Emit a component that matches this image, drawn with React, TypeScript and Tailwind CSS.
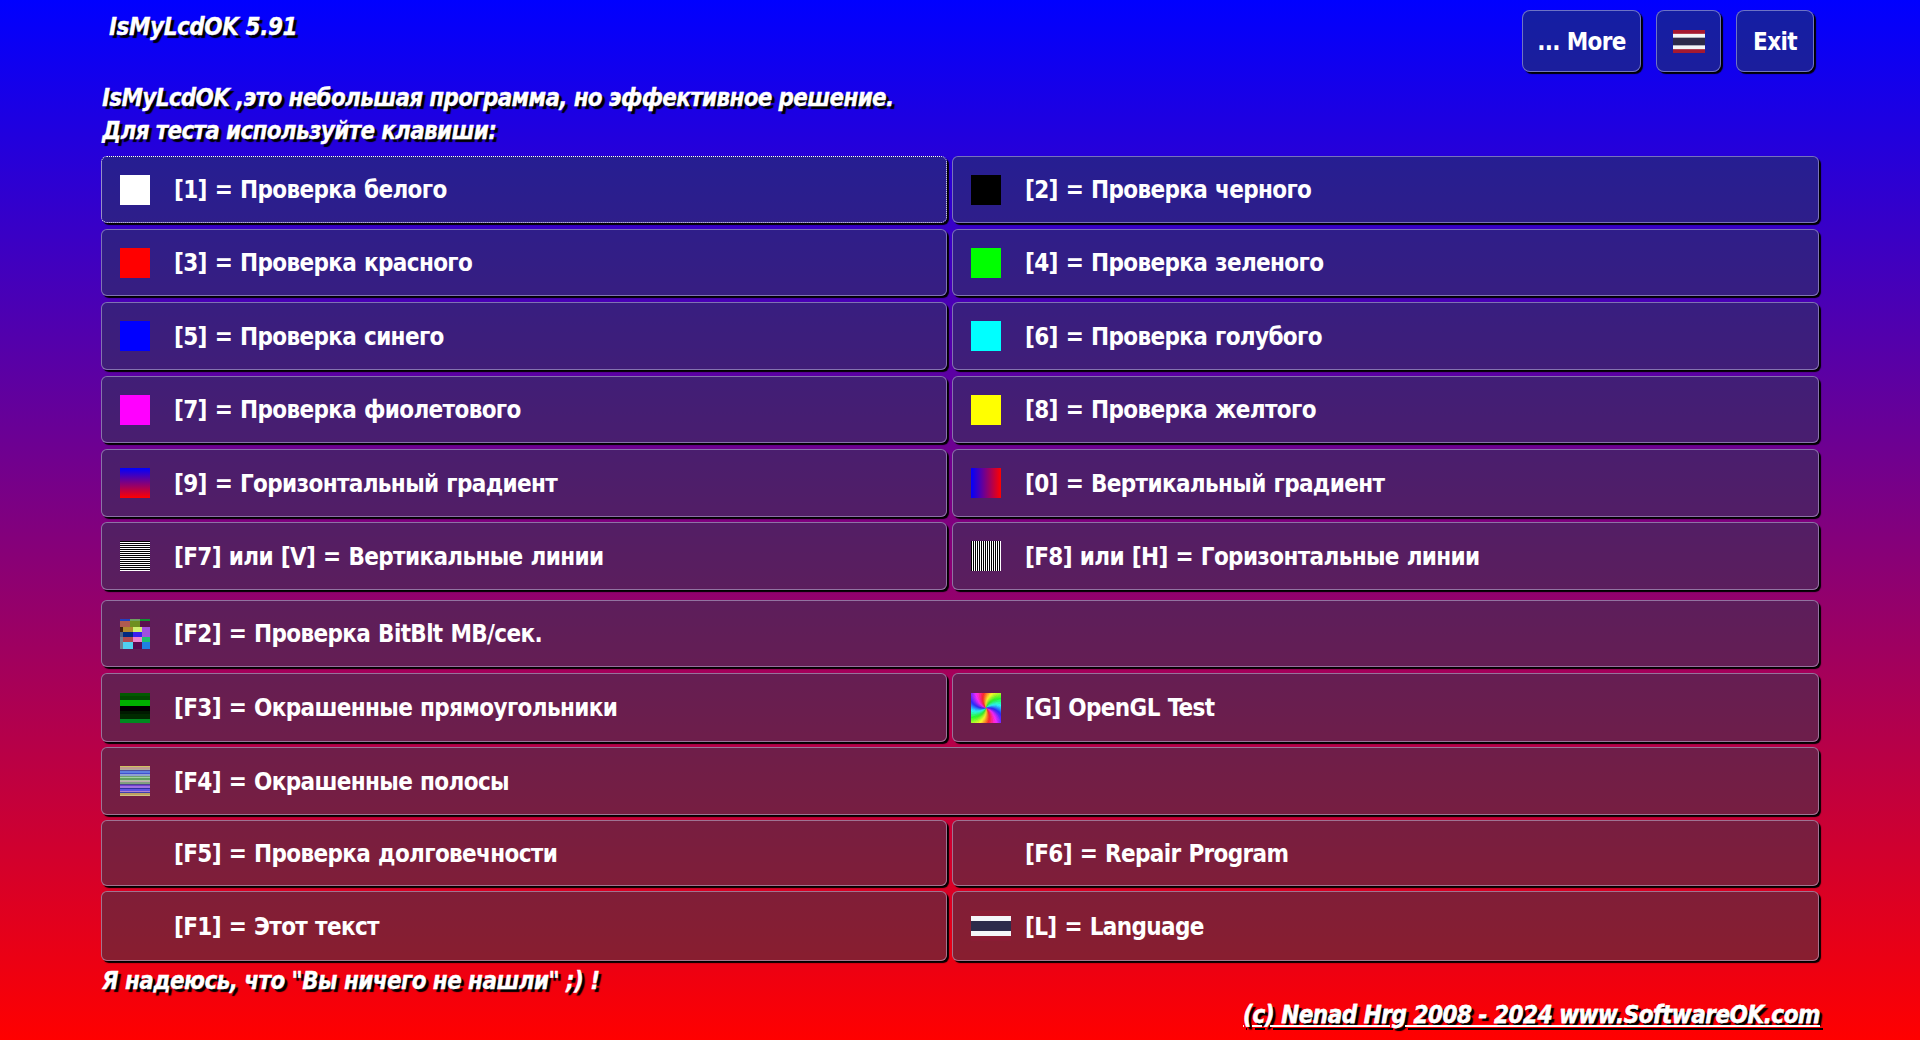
import React from 'react';

const FONT = "font-['DejaVu_Sans','Noto_Sans',sans-serif] [font-stretch:condensed]";
const HEADING = 'font-bold text-white italic [-webkit-text-stroke:0.3px_white] [text-shadow:3px_3px_1px_#000]';

const Flag = ({ className, red = '#a51931' }: { className: string; red?: string }) => (
  <svg className={className} viewBox="0 0 40 30" preserveAspectRatio="none">
    <rect width="40" height="30" fill={red} />
    <rect y="5" width="40" height="20" fill="#f4f5f8" />
    <rect y="10" width="40" height="10" fill="#2d2a4a" />
  </svg>
);

const Swatch = ({ className }: { className: string }) => <div className={`h-[30px] w-[30px] ${className}`} />;

const HLines = () => (
  <svg className="h-[30px] w-[30px]" viewBox="0 0 30 30">
    <rect width="30" height="30" fill="#fff" />
    {Array.from({ length: 15 }, (_, i) => (
      <rect key={i} y={i * 2} width="30" height="1" fill="#000" />
    ))}
  </svg>
);

const VLines = () => (
  <svg className="h-[30px] w-[30px]" viewBox="0 0 30 30">
    <rect width="30" height="30" fill="#fff" />
    {Array.from({ length: 15 }, (_, i) => (
      <rect key={i} x={i * 2} width="1" height="30" fill="#000" />
    ))}
  </svg>
);

// x, y, w, h, colour
const mosaic: [number, number, number, number, string][] = [
  [0, 0, 10, 2, '#2040c0'],
  [10, 0, 10, 2, '#70a060'],
  [20, 0, 10, 2, '#109030'],
  [0, 2, 10, 6, '#b05a50'],
  [10, 2, 10, 6, '#6f8f20'],
  [20, 2, 10, 6, '#5a1050'],
  [0, 8, 3, 5, '#402010'],
  [3, 8, 10, 5, '#b08a30'],
  [13, 8, 9, 5, '#d0f070'],
  [22, 8, 8, 10, '#a050e0'],
  [0, 13, 3, 5, '#506080'],
  [3, 13, 10, 5, '#002a80'],
  [13, 13, 9, 5, '#3a20f0'],
  [0, 18, 3, 12, '#708090'],
  [3, 18, 10, 5, '#b04a50'],
  [13, 18, 9, 5, '#f080d0'],
  [22, 18, 8, 5, '#20c070'],
  [3, 23, 10, 7, '#50d0f0'],
  [13, 23, 9, 7, '#5a0a50'],
  [22, 23, 8, 7, '#2080e0'],
];

const Mosaic = () => (
  <svg className="h-[30px] w-[30px]" viewBox="0 0 30 30" shapeRendering="crispEdges">
    {mosaic.map(([x, y, w, h, c]) => (
      <rect key={`${x}-${y}`} x={x} y={y} width={w} height={h} fill={c} />
    ))}
  </svg>
);

const greenBands: [number, number, string][] = [
  [0, 3, '#005a00'],
  [3, 4, '#004a00'],
  [7, 6, '#00b000'],
  [13, 5, '#000000'],
  [18, 3, '#001a00'],
  [21, 5, '#002a00'],
  [26, 4, '#008a20'],
];

const GreenBars = () => (
  <svg className="h-[30px] w-[30px]" viewBox="0 0 30 30" shapeRendering="crispEdges">
    {greenBands.map(([y, h, c]) => (
      <rect key={y} y={y} width="30" height={h} fill={c} />
    ))}
  </svg>
);

const stripeColors = [
  '#d0c060', '#c09a90', '#b0a8a0', '#5050a0', '#6080e0', '#4050d0', '#90a0d0', '#70a070', '#a0d0a0', '#60a060',
  '#b0c0a0', '#c0a8b0', '#80a080', '#504090', '#7040d0', '#a070e0', '#3030a0', '#6050e0', '#b080d0', '#4040b0',
  '#c0a060', '#d0c080',
];

const Stripes = () => (
  <svg className="h-[30px] w-[30px]" viewBox="0 0 30 30" preserveAspectRatio="none" shapeRendering="crispEdges">
    {stripeColors.map((c, i) => (
      <rect key={i} y={(i * 30) / 22} width="30" height={30 / 22 + 0.5} fill={c} />
    ))}
  </svg>
);

// pinwheel: thin wedges bent around the centre, hue runs round twice
const swirlArm = (a: number) => {
  const out: string[] = [];
  for (let r = 0; r <= 24; r += 2) {
    const t = ((a + r * 2) * Math.PI) / 180;
    out.push(`${(15 + r * Math.cos(t)).toFixed(2)} ${(15 + r * Math.sin(t)).toFixed(2)}`);
  }
  return out;
};

const swirlPath = (deg: number) => `M${[...swirlArm(deg), ...swirlArm(deg + 5).reverse()].join('L')}Z`;

const Swirl = () => (
  <svg className="h-[30px] w-[30px]" viewBox="0 0 30 30">
    {Array.from({ length: 120 }, (_, i) => (
      <path key={i} d={swirlPath(i * 3)} fill={`hsl(${(i * 6 + 260) % 360} 100% 58%)`} />
    ))}
  </svg>
);

type BtnProps = {
  icon?: React.ReactNode;
  label: string;
  focused?: boolean;
  className?: string;
};

const KeyButton = ({ icon, label, focused, className = '' }: BtnProps) => (
  <button
    className={`flex h-full items-center rounded-[6px] bg-[#263c4b]/50 pl-[18px] text-[24px] font-bold tracking-[-0.65px] text-white shadow-[2px_2px_1px_#000] [word-spacing:1px] ${
      focused ? 'border border-dotted border-white' : 'border border-[#c8c8e6]/50'
    } ${className}`}
  >
    <span className="flex h-[30px] w-[54px] shrink-0 items-center">{icon}</span>
    <span className="pt-[1px] whitespace-nowrap">{label}</span>
  </button>
);

const TopButton = ({ className, children }: { className: string; children: React.ReactNode }) => (
  <button
    className={`flex h-[62px] items-center justify-center rounded-[8px] border border-[#c8c8e6]/50 bg-[#263c4b]/50 pt-[1px] text-[24px] font-bold tracking-[-0.65px] text-white shadow-[2px_2px_1px_#000] ${className}`}
  >
    {children}
  </button>
);

const ROW = 'grid grid-cols-[846px_867px] gap-x-[5px]';

export default function App() {
  return (
    <div className={`flex h-[1040px] w-[1920px] flex-col overflow-hidden bg-[linear-gradient(to_bottom,#0000ff,#ff0000)] pl-[101px] ${FONT}`}>
      {/* Title and top buttons */}
      <div className="flex h-[82px] items-start pt-[10px] pr-[106px]">
        <div className={`ml-[8px] text-[24px] leading-[34px] tracking-[-0.45px] ${HEADING}`}>IsMyLcdOK 5.91</div>
        <div className="ml-auto flex gap-[15px]">
          <TopButton className="w-[119px]">... More</TopButton>
          <TopButton className="w-[65px]">
            <Flag className="h-[23px] w-[32px]" />
          </TopButton>
          <TopButton className="w-[78px]">Exit</TopButton>
        </div>
      </div>

      <div className={`ml-[1px] h-[74px] text-[24px] leading-[33px] tracking-[-0.7px] ${HEADING}`}>
        <div>IsMyLcdOK ,это небольшая программа, но эффективное решение.</div>
        <div>Для теста используйте клавиши:</div>
      </div>

      {/* Test buttons */}
      <div className={`${ROW} h-[67px]`}>
        <KeyButton focused icon={<Swatch className="bg-white" />} label="[1] = Проверка белого" />
        <KeyButton icon={<Swatch className="bg-black" />} label="[2] = Проверка черного" />
      </div>
      <div className={`${ROW} mt-[6px] h-[67px]`}>
        <KeyButton icon={<Swatch className="bg-[#ff0000]" />} label="[3] = Проверка красного" />
        <KeyButton icon={<Swatch className="bg-[#00ff00]" />} label="[4] = Проверка зеленого" />
      </div>
      <div className={`${ROW} mt-[6px] h-[68px]`}>
        <KeyButton icon={<Swatch className="bg-[#0000ff]" />} label="[5] = Проверка синего" />
        <KeyButton icon={<Swatch className="bg-[#00ffff]" />} label="[6] = Проверка голубого" />
      </div>
      <div className={`${ROW} mt-[6px] h-[67px]`}>
        <KeyButton icon={<Swatch className="bg-[#ff00ff]" />} label="[7] = Проверка фиолетового" />
        <KeyButton icon={<Swatch className="bg-[#ffff00]" />} label="[8] = Проверка желтого" />
      </div>
      <div className={`${ROW} mt-[6px] h-[68px]`}>
        <KeyButton icon={<Swatch className="bg-[linear-gradient(to_bottom,#0000ff,#ff0000)]" />} label="[9] = Горизонтальный градиент" />
        <KeyButton icon={<Swatch className="bg-[linear-gradient(to_right,#0000ff,#ff0000)]" />} label="[0] = Вертикальный градиент" />
      </div>
      <div className={`${ROW} mt-[5px] h-[68px]`}>
        <KeyButton icon={<HLines />} label="[F7] или [V] = Вертикальные линии" />
        <KeyButton icon={<VLines />} label="[F8] или [H] = Горизонтальные линии" />
      </div>
      <div className={`${ROW} mt-[10px] h-[67px]`}>
        <KeyButton className="col-span-2" icon={<Mosaic />} label="[F2] = Проверка BitBlt MB/сек." />
      </div>
      <div className={`${ROW} mt-[6px] h-[69px]`}>
        <KeyButton icon={<GreenBars />} label="[F3] = Окрашенные прямоугольники" />
        <KeyButton icon={<Swirl />} label="[G] OpenGL Test" />
      </div>
      <div className={`${ROW} mt-[5px] h-[68px]`}>
        <KeyButton className="col-span-2" icon={<Stripes />} label="[F4] = Окрашенные полосы" />
      </div>
      <div className={`${ROW} mt-[5px] h-[66px]`}>
        <KeyButton label="[F5] = Проверка долговечности" />
        <KeyButton label="[F6] = Repair Program" />
      </div>
      <div className={`${ROW} mt-[5px] h-[70px]`}>
        <KeyButton label="[F1] = Этот текст" />
        <KeyButton icon={<Flag className="h-[30px] w-[40px]" red="#8a1c34" />} label="[L] = Language" />
      </div>

      {/* Footer */}
      <div className={`mt-[4px] ml-[1px] text-[24px] leading-[33px] tracking-[-0.6px] ${HEADING}`}>
        Я надеюсь, что "Вы ничего не нашли" ;) !
      </div>
      <div className={`w-[1719px] text-right text-[24px] leading-[34px] tracking-[-0.5px] underline ${HEADING}`}>
        (c) Nenad Hrg 2008 - 2024 www.SoftwareOK.com
      </div>
    </div>
  );
}
